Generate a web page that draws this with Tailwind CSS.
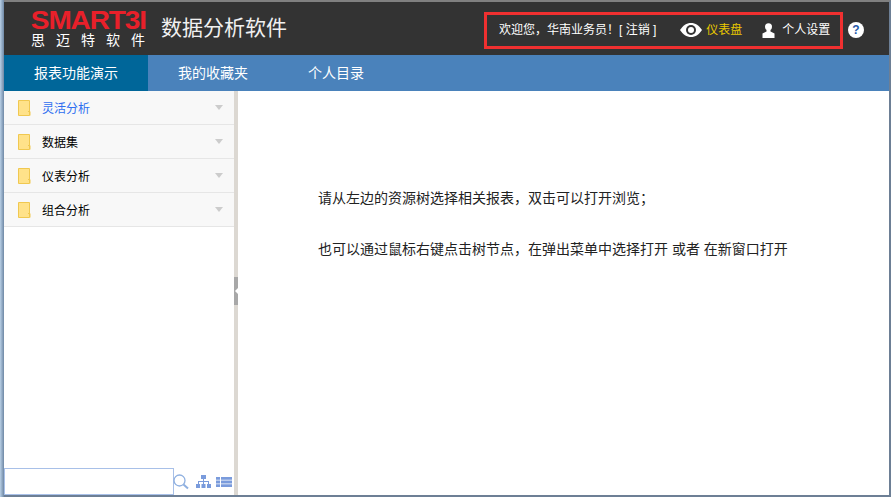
<!DOCTYPE html>
<html lang="zh-CN">
<head>
    <meta charset="UTF-8">
    <title>数据分析软件</title>
    <script src="https://cdn.jsdelivr.net/npm/@tailwindcss/browser@4"></script>
</head>
<body class="h-[497px] w-[891px] overflow-hidden bg-white font-['Liberation_Sans','Noto_Sans_CJK_SC',sans-serif] text-[12px]">
    <div class="flex h-full">
        <!-- Window frame, left side -->
        <div class="w-[4px] shrink-0 bg-linear-to-r from-[#b9d0e6] to-[#6f88a5]"></div>
        <div class="flex h-full min-w-0 flex-1 flex-col border-r-[2px] border-t-2 border-b-[2px] border-r-[#6d7f95] border-t-[#808080] border-b-[#6d7f95]">
            <!-- Header -->
            <header class="flex h-[53px] shrink-0 items-center bg-[#333333] text-white">
                <div class="ml-[27px] flex w-[114px] flex-col items-center">
                    <div class="scale-x-[1.12] text-[25px] font-bold leading-[22px] tracking-[-1px] text-[#e8202a]">SMART3I</div>
                    <div class="mr-[-11px] text-[14px] leading-[18px] tracking-[11px] text-white">思迈特软件</div>
                </div>
                <div class="ml-[16px] mb-[2px] text-[21px] text-[#f0f0f0]">数据分析软件</div>
                <div class="ml-auto mt-[3px] flex h-[37px] w-[359px] items-center border-[3px] border-[#f03030] pl-[12px]">
                    <span>欢迎您，华南业务员！[ 注销 ]</span>
                    <svg class="ml-[24px]" width="22" height="14" viewBox="0 0 22 14">
                        <path fill="#fff" d="M0 7C3 2.500 6.500 0 11 0s8 2.500 11 7c-3 4.500-6.500 7-11 7S3 11.500 0 7z"/>
                        <circle cx="11" cy="7" r="5" fill="#333"/>
                        <circle cx="11" cy="7" r="3" fill="#fff"/>
                    </svg>
                    <span class="ml-[4px] text-[#e8c800]">仪表盘</span>
                    <svg class="ml-[20px]" width="13" height="15" viewBox="0 0 13 15">
                        <circle cx="6.500" cy="3.700" r="3.500" fill="#fff"/>
                        <path fill="#fff" d="M4.500 6.500h4v2l4 2V15H.5v-4.500l4-2z"/>
                    </svg>
                    <span class="ml-[7px]">个人设置</span>
                </div>
                <div class="ml-[5px] mr-[25px] mt-[3px] flex h-[16px] w-[16px] items-center justify-center rounded-full bg-white text-[12px] font-bold leading-none text-[#2457a8]">?</div>
            </header>

            <!-- Tabs -->
            <nav class="flex h-[36px] shrink-0 items-center bg-[#4a82bb] text-[14px] text-white">
                <a class="flex h-full w-[144px] items-center justify-center bg-[#006699]">报表功能演示</a>
                <a class="flex h-full w-[130px] items-center justify-center">我的收藏夹</a>
                <a class="flex h-full w-[116px] items-center justify-center">个人目录</a>
            </nav>

            <div class="flex min-h-0 flex-1">
                <!-- Sidebar -->
                <aside class="flex w-[230px] shrink-0 flex-col bg-white">
                    <div class="flex h-[34px] items-center border-b border-[#e6e6e6] bg-[#f8f8f8] pl-[14px] pr-[11px]">
                        <svg width="13" height="16" viewBox="0 0 13 16"><path fill="#ffe28a" stroke="#f0c850" d="M.5.500h11v15H.5z"/><path fill="none" stroke="#f0c850" d="M10 11.500h2v4"/></svg>
                        <span class="ml-[11px] pt-[2px] text-[#2f6ff0]">灵活分析</span>
                        <span class="ml-auto h-0 w-0 border-x-[4px] border-t-[5px] border-x-transparent border-t-[#cccccc]"></span>
                    </div>
                    <div class="flex h-[34px] items-center border-b border-[#e6e6e6] bg-[#f8f8f8] pl-[14px] pr-[11px]">
                        <svg width="13" height="16" viewBox="0 0 13 16"><path fill="#ffe28a" stroke="#f0c850" d="M.5.500h11v15H.5z"/><path fill="none" stroke="#f0c850" d="M10 11.500h2v4"/></svg>
                        <span class="ml-[11px] pt-[2px] text-black">数据集</span>
                        <span class="ml-auto h-0 w-0 border-x-[4px] border-t-[5px] border-x-transparent border-t-[#cccccc]"></span>
                    </div>
                    <div class="flex h-[34px] items-center border-b border-[#e6e6e6] bg-[#f8f8f8] pl-[14px] pr-[11px]">
                        <svg width="13" height="16" viewBox="0 0 13 16"><path fill="#ffe28a" stroke="#f0c850" d="M.5.500h11v15H.5z"/><path fill="none" stroke="#f0c850" d="M10 11.500h2v4"/></svg>
                        <span class="ml-[11px] pt-[2px] text-black">仪表分析</span>
                        <span class="ml-auto h-0 w-0 border-x-[4px] border-t-[5px] border-x-transparent border-t-[#cccccc]"></span>
                    </div>
                    <div class="flex h-[34px] items-center border-b border-[#e6e6e6] bg-[#f8f8f8] pl-[14px] pr-[11px]">
                        <svg width="13" height="16" viewBox="0 0 13 16"><path fill="#ffe28a" stroke="#f0c850" d="M.5.500h11v15H.5z"/><path fill="none" stroke="#f0c850" d="M10 11.500h2v4"/></svg>
                        <span class="ml-[11px] pt-[2px] text-black">组合分析</span>
                        <span class="ml-auto h-0 w-0 border-x-[4px] border-t-[5px] border-x-transparent border-t-[#cccccc]"></span>
                    </div>
                    <!-- Search -->
                    <div class="mt-auto flex h-[27px] items-center">
                        <div class="h-full w-[170px] border border-[#a8c0e8] bg-white"></div>
                        <svg class="ml-[-1px]" width="16" height="16" viewBox="0 0 16 16" fill="none" stroke="#8fb0e0" stroke-width="1.300"><circle cx="6.500" cy="6.500" r="5.500"/><path stroke-width="2" d="M10.500 10.500l4.500 4"/></svg>
                        <svg class="ml-[7px]" width="15" height="13" viewBox="0 0 15 13" fill="#7a9bdc"><path d="M5 0h5v4H5zM7 4h1v2h5v3h-1V7H8v2H7V7H3v2H2V6h5z"/><path d="M0 9h4v4H0zM5.500 9h4v4h-4zM11 9h4v4h-4z"/></svg>
                        <svg class="ml-[5px]" width="16" height="10" viewBox="0 0 16 10" fill="#7a9bdc"><path d="M0 0h4v2.800H0zM5 0h11v2.800H5zM0 3.600h4v2.800H0zM5 3.600h11v2.800H5zM0 7.200h4V10H0zM5 7.200h11V10H5z"/></svg>
                    </div>
                </aside>

                <!-- Splitter -->
                <div class="flex w-[4px] shrink-0 items-center bg-[#dcd8d2]">
                    <div class="mt-[-4px] flex h-[28px] w-full items-center justify-center bg-[#a8a8a8]">
                        <span class="h-0 w-0 border-y-[3px] border-r-[3px] border-y-transparent border-r-white"></span>
                    </div>
                </div>

                <!-- Main -->
                <main class="flex-1 bg-white pl-[80px] pt-[97px] text-[14px] text-[#222]">
                    <p class="leading-[20px]">请从左边的资源树选择相关报表，双击可以打开浏览；</p>
                    <p class="mt-[31px] leading-[20px]">也可以通过鼠标右键点击树节点，在弹出菜单中选择打开 或者 在新窗口打开</p>
                </main>
            </div>
        </div>
    </div>
</body>
</html>
